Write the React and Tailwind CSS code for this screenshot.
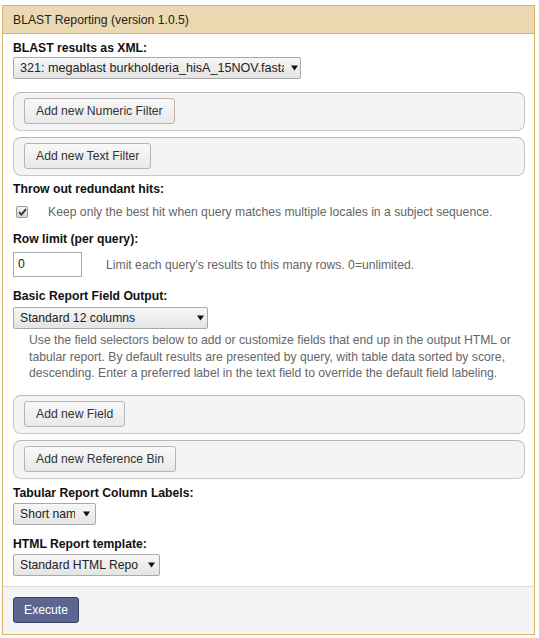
import React from "react";

const font = { fontFamily: '"Liberation Sans", Arial, sans-serif' };

function Arrow() {
  return (
    <svg width="7" height="6" viewBox="0 0 7 6" className="block">
      <path d="M0 0.5 L7 0.5 L3.5 5.5 Z" fill="#111" />
    </svg>
  );
}

function Select({ w, textW, gap, text, size = "text-[12.2px]" }) {
  return (
    <div
      className={`flex items-center h-[22px] border border-[#a9a9a9] rounded-[2px] bg-gradient-to-b from-[#f7f7f7] to-[#e4e4e4] text-[#222] pl-[6px] ${size} ${w}`}
    >
      <span className={`overflow-hidden whitespace-nowrap leading-[16px] shrink-0 ${textW}`}>{text}</span>
      <span className={gap}>
        <Arrow />
      </span>
    </div>
  );
}

function Btn({ children }) {
  return (
    <div className="inline-flex items-center h-[26px] px-[11px] border border-[#b4b4b4] rounded-[3px] bg-gradient-to-b from-[#f8f8f8] to-[#e9e9e9] text-[12.2px] text-[#333] leading-[16px] whitespace-nowrap">
      {children}
    </div>
  );
}

function Box({ children }) {
  return (
    <div className="h-[39px] border border-[#c6c6c6] border-t-[#b8b8b8] rounded-[8px] bg-[#f4f4f4] pl-[10px] pt-[5px]">
      <Btn>{children}</Btn>
    </div>
  );
}

function Label({ children, className = "" }) {
  return (
    <div className={`text-[12.2px] leading-[16px] font-bold text-[#111] ${className}`}>{children}</div>
  );
}

export default function App() {
  return (
    <div className="pt-[5px] pl-[2px]" style={font}>
      <div className="w-[533px] border border-[#d8b365] bg-white">
        <div className="bg-[#ebd9b2] border-b border-[#d8b365] pt-[6px] pb-[5px] pl-[10px] text-[12.2px] leading-[16px] text-[#222]">
          BLAST Reporting (version 1.0.5)
        </div>
        <div className="pt-[6px] pb-[10px] pl-[10px] pr-[9px]">
          <Label>BLAST results as XML:</Label>
          <div className="mt-[1px]">
            <Select
              w="w-[288px]"
              textW="w-[264px]"
              gap="ml-[7px]"
              size="text-[12.6px]"
              text="321: megablast burkholderia_hisA_15NOV.fasta"
            />
          </div>
          <div className="mt-[13px]">
            <Box>Add new Numeric Filter</Box>
          </div>
          <div className="mt-[6px]">
            <Box>Add new Text Filter</Box>
          </div>
          <Label className="mt-[5px]">Throw out redundant hits:</Label>
          <div className="mt-[7px] flex items-center h-[16px]">
            <div className="ml-[3px] w-[12px] h-[12px] rounded-[2px] border border-[#9a9a9a] bg-gradient-to-b from-[#f2f2f2] to-[#d6d6d6] flex items-center justify-center">
              <svg width="9" height="8" viewBox="0 0 9 8">
                <path d="M1 4.2 L3.4 6.6 L8 1.2" stroke="#333" strokeWidth="1.8" fill="none" />
              </svg>
            </div>
            <span className="ml-[20px] text-[12.2px] leading-[16px] text-[#666] whitespace-nowrap">
              Keep only the best hit when query matches multiple locales in a subject sequence.
            </span>
          </div>
          <Label className="mt-[11px]">Row limit (per query):</Label>
          <div className="mt-[5px] flex items-center">
            <div className="w-[69px] h-[25px] border border-[#a9a9a9] bg-white pl-[4px] flex items-center text-[12.2px] text-[#222]">
              0
            </div>
            <span className="ml-[24px] text-[12.2px] leading-[16px] text-[#666]">
              Limit each query's results to this many rows. 0=unlimited.
            </span>
          </div>
          <Label className="mt-[11px]">Basic Report Field Output:</Label>
          <div className="mt-[3px]">
            <Select w="w-[195px]" textW="w-[177px]" gap="ml-[0px]" text="Standard 12 columns" />
          </div>
          <div className="mt-[3px] pl-[16px] text-[12.2px] leading-[16.7px] text-[#666]">
            Use the field selectors below to add or customize fields that end up in the output HTML or
            tabular report. By default results are presented by query, with table data sorted by score,
            descending. Enter a preferred label in the text field to override the default field labeling.
          </div>
          <div className="mt-[13px]">
            <Box>Add new Field</Box>
          </div>
          <div className="mt-[6px]">
            <Box>Add new Reference Bin</Box>
          </div>
          <Label className="mt-[6px]">Tabular Report Column Labels:</Label>
          <div className="mt-[2px]">
            <Select w="w-[83px]" textW="w-[55px]" gap="ml-[8px]" text="Short names" />
          </div>
          <Label className="mt-[11px]">HTML Report template:</Label>
          <div className="mt-[2px]">
            <Select w="w-[147px]" textW="w-[118px]" gap="ml-[10px]" text="Standard HTML Report" />
          </div>
        </div>
        <div className="border-t border-[#dcdcdc] bg-[#f4f4f4] pt-[10px] pb-[11px] pl-[10px]">
          <div className="inline-flex items-center h-[26px] px-[10px] rounded-[3px] border border-[#3a4160] bg-[#5b6790] text-white text-[12.2px] leading-[16px]">
            Execute
          </div>
        </div>
      </div>
    </div>
  );
}
